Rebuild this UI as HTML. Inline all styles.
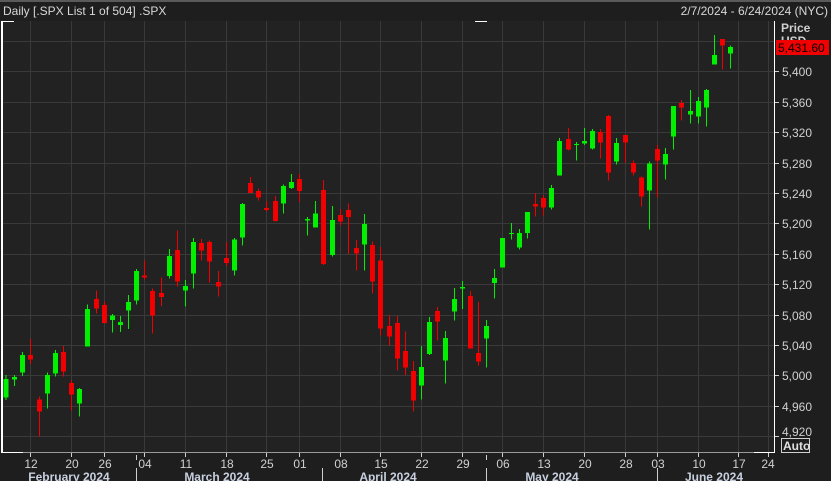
<!DOCTYPE html>
<html><head><meta charset="utf-8"><style>
html,body{margin:0;padding:0;background:#1e1e1e;width:831px;height:481px;overflow:hidden}
svg{display:block;font-family:"Liberation Sans",sans-serif}
</style></head><body>
<svg width="831" height="481" viewBox="0 0 831 481" xmlns="http://www.w3.org/2000/svg" shape-rendering="crispEdges">
<rect x="0" y="0" width="831" height="481" fill="#1e1e1e"/>
<rect x="0" y="0" width="831" height="2" fill="#5a5a5a"/>
<text x="3" y="15" font-size="12" fill="#d8d8d8">Daily [.SPX List 1 of 504] .SPX</text>
<text x="828" y="15" font-size="12" fill="#d8d8d8" text-anchor="end">2/7/2024 - 6/24/2024 (NYC)</text>
<rect x="2" y="21" width="773" height="432" fill="#222222"/>
<g fill="#3a3a3a">
<rect x="2" y="41" width="773" height="1"/><rect x="2" y="71" width="773" height="1"/><rect x="2" y="102" width="773" height="1"/><rect x="2" y="132" width="773" height="1"/><rect x="2" y="163" width="773" height="1"/><rect x="2" y="193" width="773" height="1"/><rect x="2" y="223" width="773" height="1"/><rect x="2" y="254" width="773" height="1"/><rect x="2" y="284" width="773" height="1"/><rect x="2" y="315" width="773" height="1"/><rect x="2" y="345" width="773" height="1"/><rect x="2" y="375" width="773" height="1"/><rect x="2" y="406" width="773" height="1"/><rect x="2" y="436" width="773" height="1"/>
<rect x="30" y="21" width="1" height="432"/><rect x="71" y="21" width="1" height="432"/><rect x="104" y="21" width="1" height="432"/><rect x="144" y="21" width="1" height="432"/><rect x="185" y="21" width="1" height="432"/><rect x="226" y="21" width="1" height="432"/><rect x="266" y="21" width="1" height="432"/><rect x="299" y="21" width="1" height="432"/><rect x="340" y="21" width="1" height="432"/><rect x="380" y="21" width="1" height="432"/><rect x="421" y="21" width="1" height="432"/><rect x="462" y="21" width="1" height="432"/><rect x="502" y="21" width="1" height="432"/><rect x="543" y="21" width="1" height="432"/><rect x="584" y="21" width="1" height="432"/><rect x="625" y="21" width="1" height="432"/><rect x="657" y="21" width="1" height="432"/><rect x="698" y="21" width="1" height="432"/><rect x="738" y="21" width="1" height="432"/><rect x="768" y="21" width="1" height="432"/>
</g>
<!-- borders -->
<rect x="2" y="452" width="773" height="1" fill="#9a9a9a"/>
<rect x="1" y="21" width="13" height="1" fill="#fff"/>
<rect x="475" y="21" width="12" height="1" fill="#fff"/>
<rect x="1" y="21" width="2" height="432" fill="#fff"/>
<rect x="1" y="452" width="22" height="1" fill="#fff"/>
<rect x="774" y="21" width="1" height="432" fill="#fff"/>
<rect x="754" y="452" width="21" height="1" fill="#fff"/>

<g transform="translate(0,170) scale(0.33333)">
<g fill="#00f000">
<rect x="10.5" y="627" width="15" height="55"/><rect x="16.5" y="615" width="3" height="75"/>
<rect x="35.5" y="621" width="15" height="8"/><rect x="41.5" y="615" width="3" height="33"/>
<rect x="59.5" y="555" width="15" height="53"/><rect x="65.5" y="546" width="3" height="72"/>
<rect x="134.5" y="615" width="15" height="56"/><rect x="140.5" y="608" width="3" height="108"/>
<rect x="158.5" y="549" width="15" height="62"/><rect x="164.5" y="540" width="3" height="80"/>
<rect x="230.5" y="657" width="15" height="44"/><rect x="236.5" y="654" width="3" height="86"/>
<rect x="254.5" y="417" width="15" height="113"/><rect x="260.5" y="403" width="3" height="127"/>
<rect x="329.5" y="437" width="15" height="13"/><rect x="335.5" y="432" width="3" height="56"/>
<rect x="353.5" y="456" width="15" height="9"/><rect x="359.5" y="438" width="3" height="48"/>
<rect x="377.5" y="396" width="15" height="26"/><rect x="383.5" y="375" width="3" height="102"/>
<rect x="401.5" y="303" width="15" height="89"/><rect x="407.5" y="297" width="3" height="107"/>
<rect x="500.5" y="258" width="15" height="60"/><rect x="506.5" y="237" width="3" height="89"/>
<rect x="548.5" y="348" width="15" height="14"/><rect x="554.5" y="330" width="3" height="80"/>
<rect x="572.5" y="216" width="15" height="95"/><rect x="578.5" y="204" width="3" height="152"/>
</g>
<g fill="#f00000">
<rect x="83.5" y="555" width="15" height="14"/><rect x="89.5" y="507" width="3" height="75"/>
<rect x="110.5" y="689" width="15" height="36"/><rect x="116.5" y="680" width="3" height="120"/>
<rect x="182.5" y="546" width="15" height="59"/><rect x="188.5" y="528" width="3" height="92"/>
<rect x="206.5" y="639" width="15" height="35"/><rect x="212.5" y="630" width="3" height="92"/>
<rect x="281.5" y="387" width="15" height="29"/><rect x="287.5" y="362" width="3" height="68"/>
<rect x="305.5" y="405" width="15" height="54"/><rect x="311.5" y="394" width="3" height="67"/>
<rect x="425.5" y="316" width="15" height="6"/><rect x="431.5" y="272" width="3" height="57"/>
<rect x="449.5" y="363" width="15" height="74"/><rect x="455.5" y="355" width="3" height="135"/>
<rect x="476.5" y="369" width="15" height="12"/><rect x="482.5" y="323" width="3" height="85"/>
<rect x="524.5" y="240" width="15" height="95"/><rect x="530.5" y="182" width="3" height="168"/>
</g>
</g>

<g transform="translate(190,170) scale(0.33333)">
<g fill="#f00000">
<rect x="26.5" y="219" width="15" height="23"/><rect x="32.5" y="207" width="3" height="65"/>
<rect x="50.5" y="216" width="15" height="59"/><rect x="56.5" y="212" width="3" height="126"/>
<rect x="77.5" y="336" width="15" height="14"/><rect x="83.5" y="303" width="3" height="77"/>
<rect x="101.5" y="264" width="15" height="15"/><rect x="107.5" y="216" width="3" height="72"/>
<rect x="173.5" y="39" width="15" height="30"/><rect x="179.5" y="21" width="3" height="48"/>
<rect x="197.5" y="63" width="15" height="20"/><rect x="203.5" y="55" width="3" height="37"/>
<rect x="221.5" y="114" width="15" height="6"/><rect x="227.5" y="93" width="3" height="32"/>
<rect x="248.5" y="93" width="15" height="60"/><rect x="254.5" y="78" width="3" height="77"/>
<rect x="320.5" y="27" width="15" height="36"/><rect x="326.5" y="12" width="3" height="84"/>
<rect x="392.5" y="60" width="15" height="222"/><rect x="398.5" y="30" width="3" height="255"/>
<rect x="443.5" y="135" width="15" height="20"/><rect x="449.5" y="117" width="3" height="50"/>
<rect x="467.5" y="120" width="15" height="21"/><rect x="473.5" y="101" width="3" height="151"/>
<rect x="491.5" y="234" width="15" height="17"/><rect x="497.5" y="210" width="3" height="92"/>
<rect x="539.5" y="225" width="15" height="110"/><rect x="545.5" y="215" width="3" height="156"/>
<rect x="563.5" y="272" width="15" height="204"/><rect x="569.5" y="231" width="3" height="266"/>
</g>
<g fill="#00f000">
<rect x="125.5" y="209" width="15" height="93"/><rect x="131.5" y="204" width="3" height="113"/>
<rect x="149.5" y="102" width="15" height="101"/><rect x="155.5" y="99" width="3" height="128"/>
<rect x="272.5" y="48" width="15" height="53"/><rect x="278.5" y="44" width="3" height="87"/>
<rect x="296.5" y="36" width="15" height="18"/><rect x="302.5" y="12" width="3" height="45"/>
<rect x="344.5" y="147" width="15" height="5"/><rect x="350.5" y="141" width="3" height="56"/>
<rect x="368.5" y="131" width="15" height="42"/><rect x="374.5" y="93" width="3" height="80"/>
<rect x="419.5" y="150" width="15" height="105"/><rect x="425.5" y="108" width="3" height="152"/>
<rect x="515.5" y="162" width="15" height="62"/><rect x="521.5" y="132" width="3" height="170"/>
</g>
</g>

<g transform="translate(380,110) scale(0.33333)">
<g fill="#f00000">
<rect x="20.5" y="648" width="15" height="32"/><rect x="26.5" y="615" width="3" height="92"/>
<rect x="44.5" y="639" width="15" height="107"/><rect x="50.5" y="618" width="3" height="164"/>
<rect x="68.5" y="723" width="15" height="50"/><rect x="74.5" y="665" width="3" height="130"/>
<rect x="92.5" y="783" width="15" height="89"/><rect x="98.5" y="753" width="3" height="152"/>
<rect x="164.5" y="603" width="15" height="32"/><rect x="170.5" y="591" width="3" height="101"/>
<rect x="263.5" y="558" width="15" height="158"/><rect x="269.5" y="543" width="3" height="173"/>
<rect x="287.5" y="729" width="15" height="26"/><rect x="293.5" y="576" width="3" height="191"/>
<rect x="458.5" y="282" width="15" height="8"/><rect x="464.5" y="249" width="3" height="71"/>
<rect x="482.5" y="264" width="15" height="29"/><rect x="488.5" y="255" width="3" height="62"/>
<rect x="557.5" y="87" width="15" height="32"/><rect x="563.5" y="54" width="3" height="68"/>
</g>
<g fill="#00f000">
<rect x="116.5" y="771" width="15" height="56"/><rect x="122.5" y="708" width="3" height="161"/>
<rect x="140.5" y="636" width="15" height="96"/><rect x="146.5" y="621" width="3" height="114"/>
<rect x="188.5" y="684" width="15" height="68"/><rect x="194.5" y="663" width="3" height="158"/>
<rect x="215.5" y="567" width="15" height="38"/><rect x="221.5" y="534" width="3" height="98"/>
<rect x="239.5" y="531" width="15" height="5"/><rect x="245.5" y="513" width="3" height="84"/>
<rect x="311.5" y="648" width="15" height="38"/><rect x="317.5" y="630" width="3" height="143"/>
<rect x="335.5" y="504" width="15" height="15"/><rect x="341.5" y="477" width="3" height="89"/>
<rect x="359.5" y="384" width="15" height="89"/>
<rect x="386.5" y="369" width="15" height="3"/><rect x="392.5" y="339" width="3" height="50"/>
<rect x="410.5" y="369" width="15" height="44"/><rect x="416.5" y="357" width="3" height="62"/>
<rect x="434.5" y="306" width="15" height="63"/><rect x="440.5" y="306" width="3" height="80"/>
<rect x="506.5" y="234" width="15" height="59"/><rect x="512.5" y="225" width="3" height="74"/>
<rect x="530.5" y="93" width="15" height="104"/><rect x="536.5" y="84" width="3" height="113"/>
<rect x="581.5" y="102" width="15" height="3"/><rect x="587.5" y="96" width="3" height="56"/>
</g>
</g>

<g transform="translate(570,30) scale(0.33333)">
<g fill="#00f000">
<rect x="35.5" y="333" width="15" height="8"/><rect x="41.5" y="294" width="3" height="51"/>
<rect x="59.5" y="303" width="15" height="53"/><rect x="65.5" y="297" width="3" height="62"/>
<rect x="131.5" y="339" width="15" height="56"/><rect x="137.5" y="324" width="3" height="80"/>
<rect x="230.5" y="401" width="15" height="81"/><rect x="236.5" y="395" width="3" height="204"/>
<rect x="278.5" y="372" width="15" height="32"/><rect x="284.5" y="354" width="3" height="95"/>
<rect x="302.5" y="228" width="15" height="92"/><rect x="308.5" y="228" width="3" height="131"/>
<rect x="353.5" y="243" width="15" height="11"/><rect x="359.5" y="180" width="3" height="101"/>
<rect x="377.5" y="213" width="15" height="47"/><rect x="383.5" y="201" width="3" height="80"/>
<rect x="401.5" y="180" width="15" height="53"/><rect x="407.5" y="177" width="3" height="113"/>
<rect x="425.5" y="75" width="15" height="29"/><rect x="431.5" y="15" width="3" height="89"/>
<rect x="473.5" y="51" width="15" height="20"/><rect x="479.5" y="47" width="3" height="69"/>
</g>
<g fill="#f00000">
<rect x="83.5" y="306" width="15" height="32"/><rect x="89.5" y="297" width="3" height="89"/>
<rect x="107.5" y="258" width="15" height="170"/><rect x="113.5" y="255" width="3" height="197"/>
<rect x="158.5" y="315" width="15" height="23"/><rect x="164.5" y="315" width="3" height="83"/>
<rect x="182.5" y="399" width="15" height="29"/><rect x="188.5" y="392" width="3" height="45"/>
<rect x="206.5" y="443" width="15" height="57"/><rect x="212.5" y="440" width="3" height="90"/>
<rect x="254.5" y="357" width="15" height="35"/><rect x="260.5" y="345" width="3" height="158"/>
<rect x="326.5" y="219" width="15" height="14"/><rect x="332.5" y="210" width="3" height="62"/>
<rect x="449.5" y="27" width="15" height="20"/><rect x="455.5" y="27" width="3" height="92"/>
</g>
</g>

<!-- right axis -->
<g fill="#cfcfcf"><rect x="775" y="71" width="4" height="1"/><rect x="775" y="102" width="4" height="1"/><rect x="775" y="132" width="4" height="1"/><rect x="775" y="163" width="4" height="1"/><rect x="775" y="193" width="4" height="1"/><rect x="775" y="223" width="4" height="1"/><rect x="775" y="254" width="4" height="1"/><rect x="775" y="284" width="4" height="1"/><rect x="775" y="315" width="4" height="1"/><rect x="775" y="345" width="4" height="1"/><rect x="775" y="375" width="4" height="1"/><rect x="775" y="406" width="4" height="1"/><rect x="775" y="436" width="4" height="1"/></g>
<g font-size="12" fill="#d0d0d0">
<text x="781" y="32" font-weight="bold">Price</text>
<text x="781" y="45" font-weight="bold">USD</text>
<text x="782" y="76">5,400</text><text x="782" y="107">5,360</text><text x="782" y="137">5,320</text><text x="782" y="168">5,280</text><text x="782" y="198">5,240</text><text x="782" y="228">5,200</text><text x="782" y="259">5,160</text><text x="782" y="289">5,120</text><text x="782" y="320">5,080</text><text x="782" y="350">5,040</text><text x="782" y="380">5,000</text><text x="782" y="411">4,960</text><text x="782" y="436">4,920</text>
</g>
<rect x="776" y="40" width="53" height="15" fill="#f00000"/>
<text x="778" y="52" font-size="12" fill="#000">5,431.60</text>
<rect x="781.5" y="438.5" width="28" height="14" fill="none" stroke="#d0d0d0"/>
<text x="783" y="450" font-size="12" font-weight="bold" fill="#e0e0e0">Auto</text>

<!-- bottom axis -->
<g fill="#cfcfcf"><rect x="30" y="453" width="1" height="4"/><rect x="71" y="453" width="1" height="4"/><rect x="104" y="453" width="1" height="4"/><rect x="144" y="453" width="1" height="4"/><rect x="185" y="453" width="1" height="4"/><rect x="226" y="453" width="1" height="4"/><rect x="266" y="453" width="1" height="4"/><rect x="299" y="453" width="1" height="4"/><rect x="340" y="453" width="1" height="4"/><rect x="380" y="453" width="1" height="4"/><rect x="421" y="453" width="1" height="4"/><rect x="462" y="453" width="1" height="4"/><rect x="502" y="453" width="1" height="4"/><rect x="543" y="453" width="1" height="4"/><rect x="584" y="453" width="1" height="4"/><rect x="625" y="453" width="1" height="4"/><rect x="657" y="453" width="1" height="4"/><rect x="698" y="453" width="1" height="4"/><rect x="738" y="453" width="1" height="4"/><rect x="768" y="453" width="1" height="4"/>
<rect x="136" y="455" width="1" height="5"/><rect x="136" y="468" width="1" height="13"/>
<rect x="322" y="468" width="1" height="13"/>
<rect x="486" y="455" width="1" height="5"/><rect x="486" y="468" width="1" height="13"/>
<rect x="657" y="468" width="1" height="13"/>
</g>
<g font-size="12" fill="#d0d0d0" text-anchor="middle">
<text x="31" y="468">12</text><text x="72" y="468">20</text><text x="105" y="468">26</text><text x="145" y="468">04</text><text x="186" y="468">11</text><text x="227" y="468">18</text><text x="267" y="468">25</text><text x="300" y="468">01</text><text x="341" y="468">08</text><text x="381" y="468">15</text><text x="422" y="468">22</text><text x="463" y="468">29</text><text x="503" y="468">06</text><text x="544" y="468">13</text><text x="585" y="468">20</text><text x="626" y="468">28</text><text x="658" y="468">03</text><text x="699" y="468">10</text><text x="739" y="468">17</text><text x="768" y="468">24</text>
</g>
<g font-size="12" font-weight="bold" fill="#c8d0e0" text-anchor="middle">
<text x="69" y="481">February 2024</text><text x="217" y="481">March 2024</text><text x="388" y="481">April 2024</text><text x="552" y="481">May 2024</text><text x="714" y="481">June 2024</text>
</g>
</svg>
</body></html>
